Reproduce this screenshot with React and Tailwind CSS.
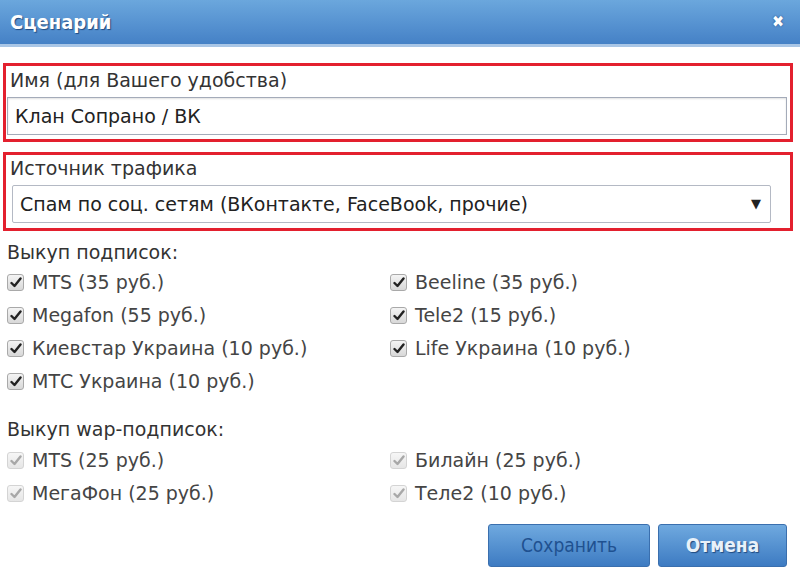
const subs = [
  ['MTS (35 руб.)', 'Beeline (35 руб.)'],
  ['Megafon (55 руб.)', 'Tele2 (15 руб.)'],
  ['Киевстар Украина (10 руб.)', 'Life Украина (10 руб.)'],
  ['МТС Украина (10 руб.)', null],
];

const wap = [
  ['MTS (25 руб.)', 'Билайн (25 руб.)'],
  ['МегаФон (25 руб.)', 'Теле2 (10 руб.)'],
];

function Check({ label, disabled }) {
  return (
    <div className="flex items-center h-[33px]">
      <span
        className={
          'w-[17px] h-[17px] rounded-[3px] border flex items-center justify-center shrink-0 ' +
          (disabled
            ? 'border-[#d4d4d4] bg-gradient-to-b from-[#f6f6f6] to-[#e6e6e6]'
            : 'border-[#a9a9a9] bg-gradient-to-b from-[#f4f4f4] to-[#d8d8d8]')
        }
      >
        <svg width="12" height="11" viewBox="0 0 12 11">
          <path
            d="M1.5 6 L4.5 9 L10.5 1.5"
            fill="none"
            stroke={disabled ? '#a8a8a8' : '#222'}
            strokeWidth="2.4"
            strokeLinecap="round"
            strokeLinejoin="round"
          />
        </svg>
      </span>
      <span className="ml-[8px] text-[#454545]">{label}</span>
    </div>
  );
}

function Rows({ rows, disabled }) {
  return (
    <div>
      {rows.map(([a, b], i) => (
        <div key={i} className="grid grid-cols-[383px_1fr]">
          <Check label={a} disabled={disabled} />
          {b ? <Check label={b} disabled={disabled} /> : <div />}
        </div>
      ))}
    </div>
  );
}

export default function App() {
  return (
    <div
      className="w-[800px] h-[578px] bg-white overflow-hidden text-[19px] text-[#333]"
      style={{ fontFamily: '"DejaVu Sans", sans-serif' }}
    >
      <div
        className="h-[47px] bg-gradient-to-b from-[#6ba7dd] to-[#4581c6] border-b-[3px] border-[#a9c6e6] flex items-center justify-between pl-[10px] pr-[16px]"
        style={{ fontFamily: '"DejaVu Sans Condensed", sans-serif' }}
      >
        <span className="text-white font-bold text-[20px] [text-shadow:1px_1px_1px_#1f4a80]">Сценарий</span>
        <span className="text-white font-bold text-[16px] [text-shadow:0_0_2px_#1f4a80]">✖</span>
      </div>

      <div className="pl-[3px] pr-[7px] pt-[16px]">
        <div className="border-[3px] border-[#e3202e] pl-[1px] pr-[3px] pb-[4px]">
          <div className="h-[31px] pl-[3px] pt-[2px] leading-[24px]">Имя (для Вашего удобства)</div>
          <div className="h-[38px] border border-[#a4abb9] shadow-[inset_0_1px_2px_rgba(0,0,0,0.12)] flex items-center pl-[7px] text-[#222]">
            Клан Сопрано / ВК
          </div>
        </div>

        <div className="mt-[10px] border-[3px] border-[#e3202e] pl-[6px] pr-[19px] pb-[5px]">
          <div className="h-[30px] -ml-[2px] pt-[1px] leading-[24px]">Источник трафика</div>
          <div className="h-[38px] border border-[#b4b9c4] rounded-[2px] flex items-center justify-between pl-[7px] pr-[9px] text-[#222]">
            <span>Спам по соц. сетям (ВКонтакте, FaceBook, прочие)</span>
            <span className="text-[13px]">▼</span>
          </div>
        </div>
      </div>

      <div className="px-[7px] pt-[8px]">
        <div className="leading-[27px]">Выкуп подписок:</div>
        <Rows rows={subs} />
        <div className="leading-[30px] mt-[16px]">Выкуп wap-подписок:</div>
        <Rows rows={wap} disabled />
      </div>

      <div
        className="flex justify-end gap-[8px] pr-[13px] mt-[14px] text-[19px]"
        style={{ fontFamily: '"DejaVu Sans Condensed", sans-serif' }}
      >
        <div className="w-[162px] h-[43px] rounded-[3px] border border-[#3a6fae] bg-gradient-to-b from-[#6fa9df] to-[#3d7bc2] flex items-center justify-center">
          <span className="text-[#1f5190]">Сохранить</span>
        </div>
        <div className="w-[129px] h-[43px] rounded-[3px] border border-[#3a6fae] bg-gradient-to-b from-[#6fa9df] to-[#3d7bc2] flex items-center justify-center">
          <span className="text-[#e8f1fa] font-bold [text-shadow:1px_1px_1px_#1f4a80]">Отмена</span>
        </div>
      </div>
    </div>
  );
}
